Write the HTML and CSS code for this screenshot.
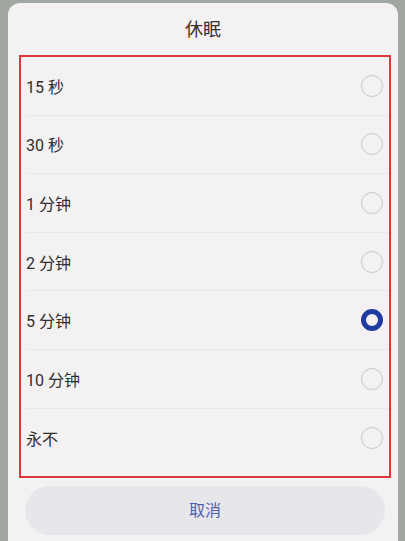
FILE: index.html
```html
<!DOCTYPE html>
<html>
<head>
    <title>休眠</title>
    <link rel="stylesheet" href="styles.css">
</head>
<body>
    <div class="dialog">
        <h2 class="dialog-title">休眠</h2>
        <div class="option-list">
            <div class="option"><span>15 秒</span><span class="radio"></span></div>
            <div class="option"><span>30 秒</span><span class="radio"></span></div>
            <div class="option"><span>1 分钟</span><span class="radio"></span></div>
            <div class="option"><span>2 分钟</span><span class="radio"></span></div>
            <div class="option"><span>5 分钟</span><span class="radio checked"></span></div>
            <div class="option"><span>10 分钟</span><span class="radio"></span></div>
            <div class="option last"><span>永不</span><span class="radio"></span></div>
        </div>
        <button class="cancel">取消</button>
    </div>
</body>
</html>
```
FILE: styles.css
```css
html, body {
    margin: 0;
    height: 100%;
    overflow: hidden;
}
body {
    background: #a3a7a2;
    font-family: Roboto, "Noto Sans CJK SC", sans-serif;
    color: #2e2e2e;
}
.dialog {
    margin: 3px 7px 0 8px;
    height: 538px;
    background: #f3f1f2;
    border-radius: 12px 12px 0 0;
    display: flex;
    flex-direction: column;
    align-items: stretch;
}
.dialog-title {
    margin: 0;
    height: 52px;
    line-height: 54px;
    text-align: center;
    font-size: 18px;
    font-weight: normal;
    color: #333;
}
.option-list {
    margin: 0 7px 0 11px;
    height: 419px;
    border: 2px solid #d9393b;
    display: flex;
    flex-direction: column;
}
.option {
    height: 58.6px;
    margin-left: 5px;
    padding-right: 6px;
    border-bottom: 1px solid #e9e7e7;
    box-sizing: border-box;
    display: flex;
    align-items: center;
    justify-content: space-between;
    font-size: 16px;
}
.option.last {
    border-bottom: none;
}
.radio {
    width: 22px;
    height: 22px;
    box-sizing: border-box;
    border: 1.5px solid #c9c8c8;
    border-radius: 50%;
}
.radio.checked {
    border: 5px solid #1e3aa3;
}
.cancel {
    margin: 8px 13px 0 17px;
    height: 49px;
    padding-bottom: 4px;
    border: none;
    border-radius: 25px;
    background: #e7e6ea;
    color: #4c5fb2;
    font-family: inherit;
    font-size: 16px;
}
```
